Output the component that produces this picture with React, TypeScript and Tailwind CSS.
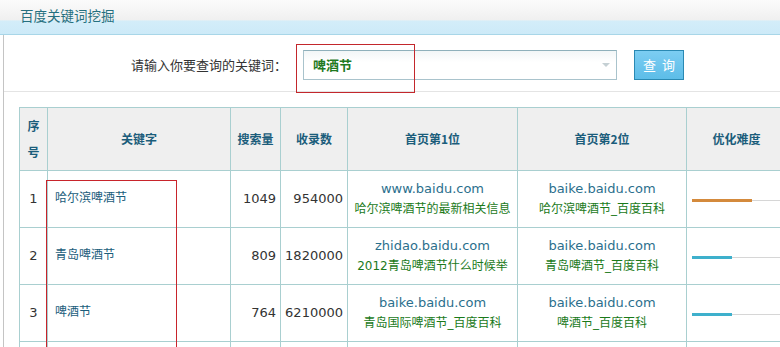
import React from "react";

const rows = [
  {
    no: 1,
    keyword: "哈尔滨啤酒节",
    search: 1049,
    indexed: 954000,
    first: { url: "www.baidu.com", title: "哈尔滨啤酒节的最新相关信息" },
    second: { url: "baike.baidu.com", title: "哈尔滨啤酒节_百度百科" },
    level: 60,
    color: "bg-[#d48a3c]",
  },
  {
    no: 2,
    keyword: "青岛啤酒节",
    search: 809,
    indexed: 1820000,
    first: { url: "zhidao.baidu.com", title: "2012青岛啤酒节什么时候举" },
    second: { url: "baike.baidu.com", title: "青岛啤酒节_百度百科" },
    level: 40,
    color: "bg-[#3eb0cc]",
  },
  {
    no: 3,
    keyword: "啤酒节",
    search: 764,
    indexed: 6210000,
    first: { url: "baike.baidu.com", title: "青岛国际啤酒节_百度百科" },
    second: { url: "baike.baidu.com", title: "啤酒节_百度百科" },
    level: 40,
    color: "bg-[#3eb0cc]",
  },
];

const font = "font-['DejaVu_Sans','Noto_Sans_CJK_SC',sans-serif]";

const App = () => {
  return (
    <div className={`relative w-[780px] h-[347px] overflow-hidden bg-white ${font}`}>
      {/* title bar */}
      <div className="h-[35px] border-b border-[#a8d6e8] bg-[linear-gradient(#fbfbfb,#f0f0f0_58%,#d3edf9_62%,#cdeaf8)] pl-[20px] pt-[4px]">
        <span className="text-[13.5px] text-[#26707f] font-['Noto_Sans_CJK_SC',sans-serif]">百度关键词挖掘</span>
      </div>

      <div className="ml-[3px] border-l border-[#c4c4c4] h-[312px]">
        {/* search row */}
        <div className="h-[57px] border-b border-[#e4e4e4] flex items-center pl-[127px] pt-[3px]">
          <span className="text-[13px] text-[#333] font-['Noto_Sans_CJK_SC',sans-serif] w-[172px] shrink-0">
            请输入你要查询的关键词：
          </span>
          <div className="shrink-0 w-[314px] h-[30px] border border-[#a9c3cc] border-t-[#8fb0bb] bg-[linear-gradient(#f2f6f7,#ffffff_40%)] flex items-center justify-between pl-[9px] pr-[6px]">
            <span className="text-[13px] font-bold text-[#1f7a1f] font-['Noto_Sans_CJK_SC',sans-serif]">啤酒节</span>
            <span className="w-0 h-0 border-l-[4px] border-r-[4px] border-t-[4px] border-l-transparent border-r-transparent border-t-[#c5d0d4]" />
          </div>
          <button className="shrink-0 ml-[17px] w-[50px] h-[30px] bg-[linear-gradient(#7ccdf2,#5dbde8)] border border-[#2a89b3] text-white text-[13px] tracking-[6px] pl-[6px] font-['Noto_Sans_CJK_SC',sans-serif]">
            查询
          </button>
        </div>

        {/* result table */}
        <table className="mt-[15px] ml-[15px] border-collapse table-fixed w-[767px]">
          <colgroup>
            <col className="w-[28px]" />
            <col className="w-[183px]" />
            <col className="w-[50px]" />
            <col className="w-[67px]" />
            <col className="w-[170px]" />
            <col className="w-[169px]" />
            <col className="w-[100px]" />
          </colgroup>
          <thead>
            <tr className="h-[63px] bg-[#efefef] text-[12px] font-bold text-[#1b5d7b] font-['Noto_Sans_CJK_SC',sans-serif]">
              <th className="border border-[#a9cfd0] leading-[26px] font-bold">序<br />号</th>
              <th className="border border-[#a9cfd0] font-bold">关键字</th>
              <th className="border border-[#a9cfd0] font-bold">搜索量</th>
              <th className="border border-[#a9cfd0] font-bold">收录数</th>
              <th className="border border-[#a9cfd0] font-bold">首页第1位</th>
              <th className="border border-[#a9cfd0] font-bold">首页第2位</th>
              <th className="border border-[#a9cfd0] font-bold">优化难度</th>
            </tr>
          </thead>
          <tbody>
            {rows.map((r) => (
              <tr key={r.no} className="h-[57px]">
                <td className="border border-[#a9cfd0] text-center text-[13px] text-[#333]">{r.no}</td>
                <td className="border border-[#a9cfd0] pl-[7px] pb-[4px] text-[12px] text-[#1b5d7b] font-['Noto_Sans_CJK_SC',sans-serif]">
                  {r.keyword}
                </td>
                <td className="border border-[#a9cfd0] text-right pr-[4px] text-[13px] text-[#333]">{r.search}</td>
                <td className="border border-[#a9cfd0] text-right pr-[4px] text-[13px] text-[#333]">{r.indexed}</td>
                {[r.first, r.second].map((s, i) => (
                  <td key={i} className="border border-[#a9cfd0] text-center">
                    <div className="text-[13px] leading-[20px] text-[#2b6f8d]">{s.url}</div>
                    <div className="text-[12px] leading-[21px] text-[#1a7a1a] whitespace-nowrap">{s.title}</div>
                  </td>
                ))}
                <td className="border border-[#a9cfd0] pl-[5px]">
                  <div className="relative h-[3px] mt-[2px]">
                    <div className="absolute left-0 right-0 top-[1px] h-px bg-[#d6d6d6]" />
                    <div className={`absolute left-0 top-0 h-[3px] ${r.color}`} style={{ width: r.level }} />
                  </div>
                </td>
              </tr>
            ))}
            <tr className="h-[20px]">
              {Array.from({ length: 7 }).map((_, i) => (
                <td key={i} className="border border-[#a9cfd0]" />
              ))}
            </tr>
          </tbody>
        </table>
      </div>

      {/* red annotation boxes */}
      <div className="absolute z-10 left-[296px] top-[44px] w-[119px] h-[49px] border border-[#c3272c]" />
      <div className="absolute z-10 left-[46px] top-[180px] w-[131px] h-[180px] border-[1.5px] border-[#c8242b]" />
    </div>
  );
};

export default App;
